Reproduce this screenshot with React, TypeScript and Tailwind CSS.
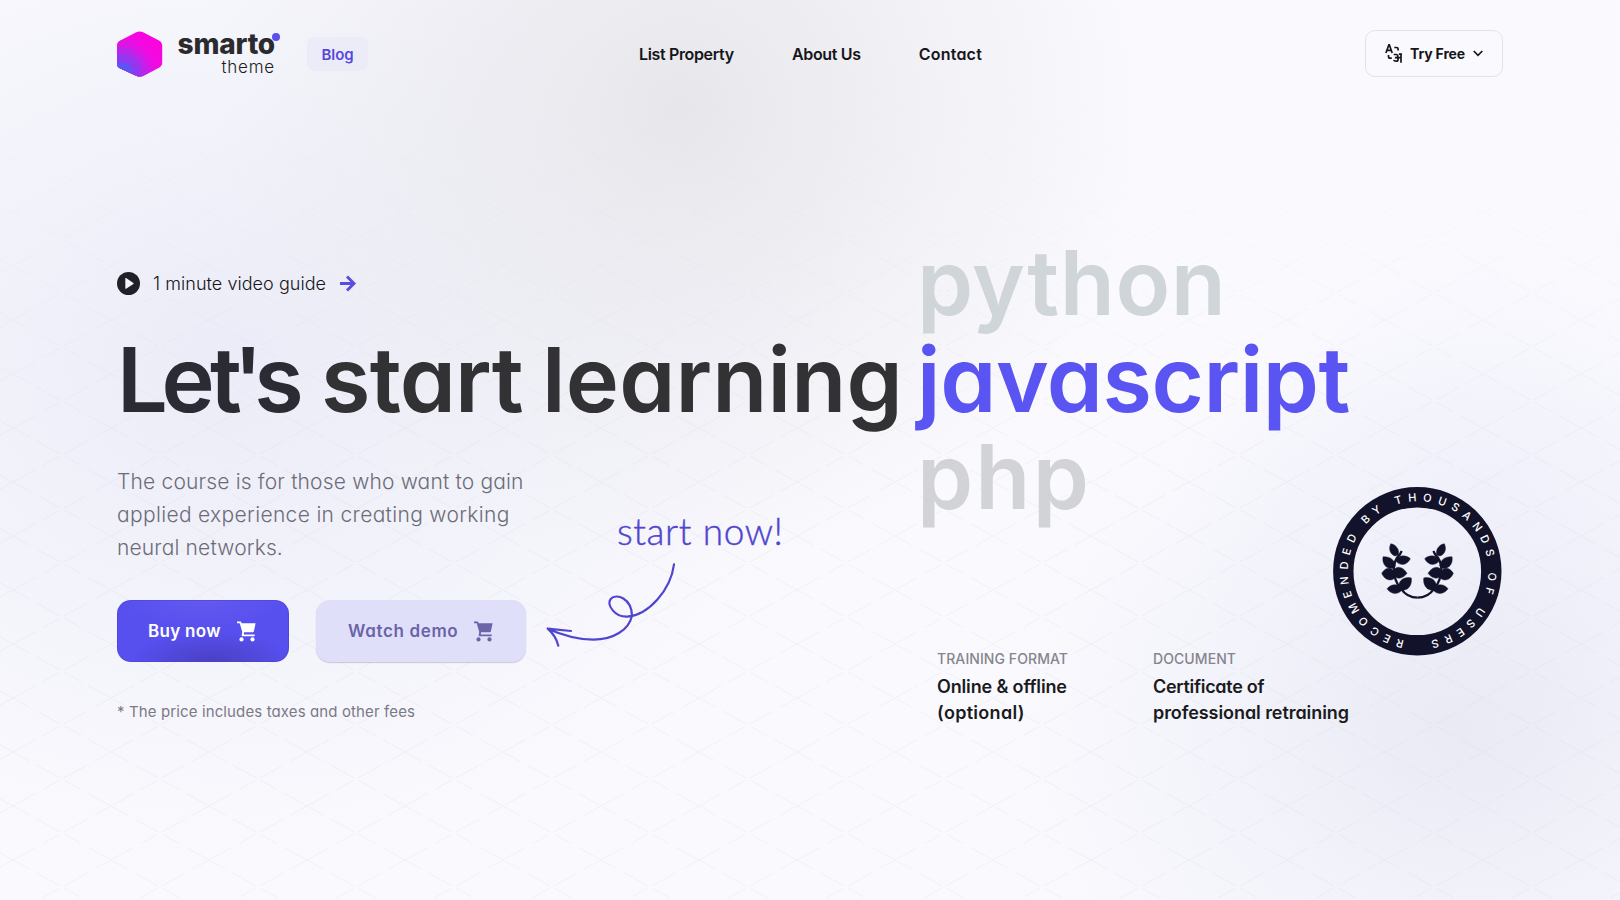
import type { ReactNode } from "react";

const single = "[font-feature-settings:'cv11','ss03']";

function Logo() {
  return (
    <a className="flex items-start gap-[15px]" href="#">
      <svg className="mt-px h-[46px] w-[46px]" viewBox="0 0 46 46">
        <defs>
          <clipPath id="hex">
            <path d="M19.3 1.3Q22.7-.5 26.100 1.3L42 9.600Q45.200 11.400 45.200 15V31.500Q45.200 35 42 36.800L26.500 44.700Q22.700 46.400 19 44.700L3.300 37.600Q0 35.900 0 32.500V14.500Q0 11.200 3.300 9.400Z" />
          </clipPath>
          <linearGradient id="base" x1="0" y1="1" x2="1" y2="0">
            <stop offset="0" stopColor="#c022e6" />
            <stop offset=".5" stopColor="#f00be2" />
            <stop offset="1" stopColor="#ff00dc" />
          </linearGradient>
        </defs>
        <g clipPath="url(#hex)">
          <rect width="46" height="46" fill="url(#base)" />
          <circle cx="4" cy="43" r="34" fill="#d41ae6" opacity=".55" />
          <circle cx="4" cy="43" r="27" fill="#ae2cec" opacity=".75" />
          <circle cx="4" cy="43" r="20" fill="#8a3bf0" opacity=".85" />
          <circle cx="4" cy="43" r="12" fill="#5a55f2" opacity=".95" />
        </g>
      </svg>
      <span className="relative flex w-[97px] flex-col items-end">
        <span className="h-[29px] text-[28px] leading-[29px] font-extrabold tracking-[-0.200px] whitespace-nowrap text-[#2b2b2f]">smarto</span>
        <span className={`${single} h-[17px] text-[17px] leading-[17px] font-light tracking-[0.800px] text-[#1d1d22]`}>theme</span>
        <span className="absolute top-[3px] -right-[5px] h-[8px] w-[8px] rounded-full bg-[#5b4df0]" />
      </span>
    </a>
  );
}

function TranslateIcon() {
  return (
    <svg className="h-[19px] w-[18px]" viewBox="0 0 18 19" fill="none" stroke="#15151a" strokeWidth="1.700">
      <path d="M.9 9 3.900.8h.4L7.200 9M1.900 6.300h4.400" />
      <path d="M9.300 3.500h2.200q1.600 0 1.600 1.600v1.300M3.500 11v1.500q0 1.700 1.700 1.700h1.600" />
      <path d="M8.700 10.500h2.600q1.600.1 1.600 1.600t-1.800 1.600H9.900M11.200 13.700q1.900.1 1.900 1.800t-2 1.700-2.300-1.300M13 13.700h2.800M13.900 10.200H17M16 10.200v8.500" />
    </svg>
  );
}

function Cart() {
  return (
    <svg className="h-[21px] w-[19px]" viewBox="0 0 19 21" fill="currentColor">
      <path d="M0 .4h3.900l.8 1.900H18.600L16.900 10.300Q16.700 11.200 15.800 11.200H7l-.2 2.200H17.700v1.900H5.500Q4.500 15.300 4.700 14.200L5.200 10.800 2.700 2.300H0Z" />
      <circle cx="4.500" cy="18.400" r="2.100" />
      <circle cx="15.500" cy="18.400" r="2.100" />
    </svg>
  );
}

function Wreath() {
  const leaves = (
    <>
      <g stroke="#12132a" strokeWidth="1.200" strokeLinejoin="round">
        <path d="M213 207C206 222 210 238 226 244L236 241C240 228 232 210 213 207Z" />
        <path d="M272 252C258 239 236 241 227 257C238 275 262 273 272 252Z" />
        <path d="M190 246C186 266 199 284 220 281L227 274C226 257 211 244 190 246Z" />
        <path d="M262 296C250 275 230 272 221 287C217 308 241 323 262 296Z" />
        <path d="M186 296C195 318 219 324 230 303C220 277 200 273 186 296Z" />
        <path d="M275 310C255 304 236 317 237 336L243 346C263 350 278 334 275 310Z" />
        <path d="M202 342C213 359 238 362 248 344C236 325 215 326 202 342Z" />
      </g>
      <path d="M246 229L240 240Q224 256 222 280Q223 320 243 341Q262 369 293.500 369" fill="none" stroke="#12132a" strokeWidth="7" />
    </>
  );
  return (
    <g fill="#12132a" transform="translate(-13.3 -12.300) scale(.33333)">
      {leaves}
      <g transform="translate(587 0) scale(-1 1)">{leaves}</g>
    </g>
  );
}

function Badge() {
  return (
    <svg className="h-[169px] w-[169px]" viewBox="0 0 169 169">
      <defs>
        <path id="ring" d="M71.100 153.300A70.300 70.300 0 1 1 99.100 153.300" />
      </defs>
      <circle cx="84.300" cy="84.300" r="74" fill="none" stroke="#12132a" strokeWidth="20.400" />
      <text fill="#fff" fontSize="11" fontWeight="500" fontFamily="Inter, sans-serif">
        <textPath href="#ring" textLength="414" lengthAdjust="spacing">RECOMENDED BY THOUSANDS OF USERS</textPath>
      </text>
      <Wreath />
    </svg>
  );
}

function Fact({ label, children, className }: { label: string; children: ReactNode; className: string }) {
  return (
    <div className={`${className} pt-[221px]`}>
      <p className="text-[14px] leading-5 font-medium tracking-[0.080px] text-[#85858f]">{label}</p>
      <p className={`${single} mt-[5px] text-[18px] leading-[26px] font-semibold whitespace-nowrap text-[#1a1a20]`}>{children}</p>
    </div>
  );
}

function Backdrop() {
  return (
    <>
      <div className="absolute inset-0 -z-20 bg-[#fafafe] bg-[radial-gradient(ellipse_470px_460px_at_680px_110px,rgba(228,228,232,0.85),rgba(232,232,238,0.55)_50%,transparent),radial-gradient(ellipse_640px_520px_at_230px_360px,rgba(231,231,246,0.75),rgba(236,236,248,0.5)_50%,transparent),radial-gradient(ellipse_480px_400px_at_1460px_730px,rgba(230,230,243,0.8),rgba(236,236,248,0.5)_50%,transparent),radial-gradient(ellipse_300px_300px_at_1480px_500px,rgba(240,240,252,0.7),transparent)]" />
      <svg className="absolute inset-0 -z-10 h-[900px] w-[1620px]">
        <defs>
          <pattern id="grid" width="98" height="54" x="13" y="50" patternUnits="userSpaceOnUse">
            <path d="M0 0L98 54M98 0L0 54" stroke="#d6d6e0" strokeWidth=".7" strokeDasharray="19 8 27 5" opacity=".36" />
          </pattern>
          <linearGradient id="fade" x1="0" y1="0" x2="0" y2="1">
            <stop offset=".08" stopColor="#fff" stopOpacity="0" />
            <stop offset=".5" stopColor="#fff" />
          </linearGradient>
          <mask id="fadeMask"><rect width="1620" height="900" fill="url(#fade)" /></mask>
        </defs>
        <rect width="1620" height="900" fill="url(#grid)" mask="url(#fadeMask)" />
      </svg>
    </>
  );
}

export default function App() {
  return (
    <div className="relative isolate h-[900px] w-[1620px] overflow-hidden px-[117px] font-['Inter',sans-serif] text-[#15151a]">
      <Backdrop />

      <header className="flex h-[107px] items-center">
        <Logo />
        <a href="#" className={`${single} ml-[32px] flex h-[34px] w-[61px] items-center justify-center rounded-lg bg-[#ececf9] pt-[3px] text-[15px] font-semibold tracking-[-0.1px] text-[#5548dc]`}>Blog</a>
        <nav className={`${single} ml-[271px] flex w-[343px] justify-between pt-px text-[16px] font-semibold whitespace-nowrap`}>
          <a href="#" className="tracking-[-0.350px]">List Property</a>
          <a href="#" className="tracking-[-0.350px]">About Us</a>
          <a href="#" className="tracking-[0.200px]">Contact</a>
        </nav>
        <button className="ml-auto flex h-[47px] w-[138px] items-center rounded-[10px] border border-[#e2e2ea] pl-[19px]">
          <TranslateIcon />
          <span className="ml-[7px] w-[55px] text-[14px] font-bold tracking-[-0.150px] whitespace-nowrap">Try Free</span>
          <svg className="ml-[8px] h-[7px] w-[10px]" viewBox="0 0 10 7" fill="none" stroke="#15151a" strokeWidth="1.700"><path d="M.7 1 5 5.300 9.300 1" /></svg>
        </button>
      </header>

      <main>
        <a href="#" className="mt-[161px] flex h-[30px] items-center">
          <svg className="h-[23px] w-[23px]" viewBox="0 0 23 23">
            <circle cx="11.500" cy="11.500" r="11.500" fill="#1f2028" />
            <path d="M8.300 6.500v9.800q0 .8.800.4l7.300-4.600q.6-.5 0-1L9.100 6.100q-.8-.4-.8.400Z" fill="#f4f4fb" />
          </svg>
          <span className={`${single} ml-[13px] w-[174px] text-[18px] font-light tracking-[0.050px] whitespace-nowrap text-[#15151a]`}>1 minute video guide</span>
          <svg className="ml-[13px] h-[17px] w-[16px]" viewBox="0 0 16 17" fill="none" stroke="#5a4ce0" strokeWidth="2.900"><path d="M0 8.500h13.500M7 1.400l7 7.100-7 7.100" /></svg>
        </a>

        <h1 className={`${single} mt-[33px] flex h-[97px] text-[90px] leading-[97px] font-semibold whitespace-nowrap text-[#323234]`}>
          <span className="w-[204px] text-[#2b2b33]">
            <span className="tracking-[-6.500px]">L</span><span className="tracking-[-4.500px]">e</span><span className="tracking-[-8.500px]">t'</span>s
          </span>
          <span className="w-[221px] tracking-[-0.800px]">start</span>
          <span className="w-[375px] tracking-[0.200px]">learning</span>
          <span className="relative tracking-[-0.400px] text-[#5a54f2]">
            javascript
            <span className="absolute -top-[97px] left-0 tracking-[0.600px] text-[#d0d5d9]">python</span>
            <span className="absolute top-[97px] left-0 tracking-[2.200px] text-[#d1d3d6]">php</span>
          </span>
        </h1>

        <div className="flex">
          <section className="w-[409px]">
            <p className={`${single} mt-[38px] text-[21px] leading-[32.800px] font-light whitespace-nowrap text-[#6c6c78]`}>
              <span className="block tracking-[0.170px]">The course is for those who want to gain</span>
              <span className="block tracking-[0.330px]">applied experience in creating working</span>
              <span className="block tracking-[0.150px]">neural networks.</span>
            </p>
            <div className={`${single} mt-[36px] flex justify-between text-[17px] font-semibold whitespace-nowrap`}>
              <button className="flex h-[62px] w-[172px] items-center rounded-[14px] bg-[#574fee] bg-[radial-gradient(ellipse_80px_30px_at_55%_100%,rgba(72,62,190,0.9),transparent),radial-gradient(ellipse_90px_30px_at_50%_0%,rgba(102,92,242,0.8),transparent)] pl-[31px] text-white shadow-[inset_0_0_0_1px_rgba(72,64,210,0.5)]">
                <span className="w-[89px] text-left tracking-[0.300px]">Buy now</span>
                <Cart />
              </button>
              <button className="flex h-[62px] w-[210px] items-center rounded-[14px] bg-[#e0dffa] pl-[32px] text-[#6c63a8] shadow-[0_1px_1px_rgba(120,110,170,0.35)]">
                <span className="w-[126px] text-left tracking-[0.650px]">Watch demo</span>
                <Cart />
              </button>
            </div>
            <p className={`${single} mt-[40px] text-[15px] leading-5 tracking-[0.120px] text-[#7a7a85]`}>* The price includes taxes and other fees</p>
          </section>

          <aside className="ml-[19px] w-[260px] pt-[76px] text-[#4f45cf]">
            <p className="ml-[72px] text-[37px] leading-[54px] font-light tracking-[0.600px] whitespace-nowrap font-['Lato',sans-serif] [-webkit-text-stroke:0.400px_#4f45cf]">start now!</p>
            <svg className="mt-[2px] h-[90px] w-[150px]" viewBox="45 180 450 270" fill="none" stroke="#5045cf" strokeWidth="6.500" strokeLinecap="round" strokeLinejoin="round">
              <path d="M432 193C422 270 356 345 292 350C255 352 229 315 242 297C259 278 305 295 306 347C297 390 249 419 190 419Q125 418 53 386M123 393L53 386Q78 408 85 437" />
            </svg>
          </aside>

          <Fact label="TRAINING FORMAT" className="ml-[132px] w-[216px]">
            <span className="block tracking-[-0.150px]">Online &amp; offline</span>
            <span className="block tracking-[0.300px]">(optional)</span>
          </Fact>
          <Fact label="DOCUMENT" className="w-[180px]">
            <span className="block tracking-[-0.300px]">Certificate of</span>
            <span className="block tracking-[-0.070px]">professional retraining</span>
          </Fact>
          <div className="pt-[59px]"><Badge /></div>
        </div>
      </main>
    </div>
  );
}
